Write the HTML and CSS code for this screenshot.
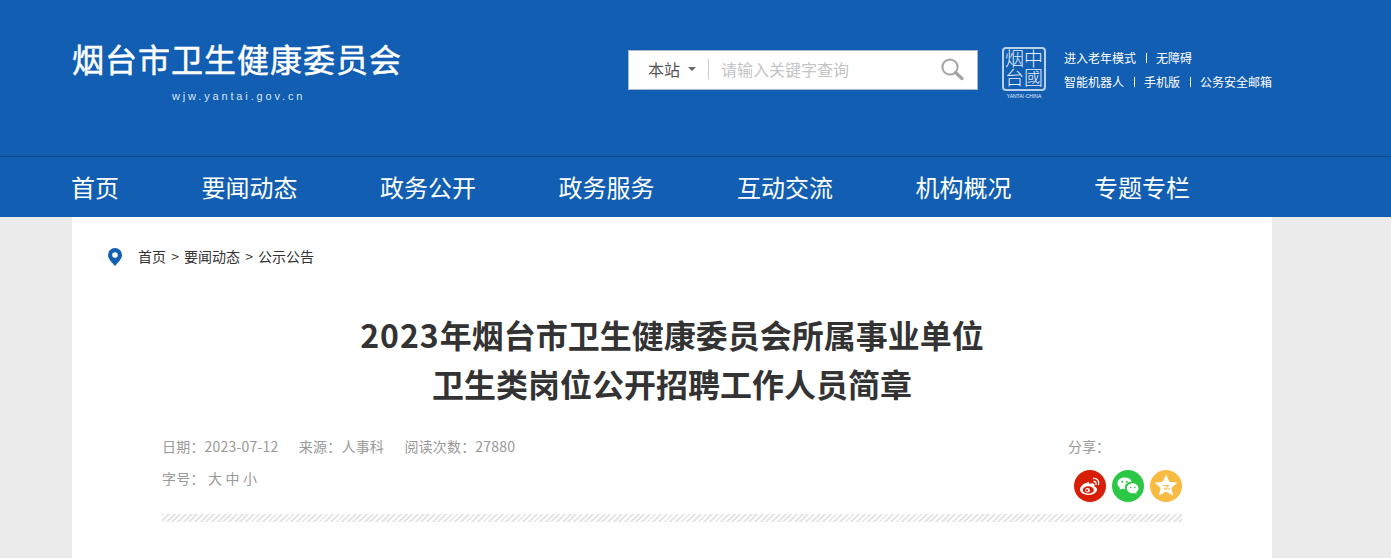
FILE: index.html
```html
<!DOCTYPE html>
<html lang="zh-CN">
<head>
<meta charset="UTF-8">
<title>烟台市卫生健康委员会</title>
<link rel="stylesheet" href="styles.css">
</head>
<body>
<header class="top">
  <div class="wrap top-inner">
    <div class="logo">
      <div class="logo-name">烟台市卫生健康委员会</div>
      <div class="logo-url">wjw.yantai.gov.cn</div>
    </div>
    <div class="search">
      <span class="scope">本站</span>
      <i class="caret"></i>
      <span class="divider"></span>
      <span class="placeholder">请输入关键字查询</span>
      <svg class="search-icon" width="24" height="24" viewBox="0 0 24 24">
        <circle cx="10" cy="10" r="7.6" fill="none" stroke="#a3a3a3" stroke-width="2"/>
        <path d="M15.5 15.5L22 21.5" stroke="#a3a3a3" stroke-width="3.2" stroke-linecap="round"/>
      </svg>
    </div>
    <div class="seal">
      <div class="seal-box">
        <span class="seal-col">烟台</span>
        <span class="seal-col">中國</span>
      </div>
      <div class="seal-en">YANTAI·CHINA</div>
    </div>
    <div class="quick">
      <div class="quick-row"><a>进入老年模式</a><a>无障碍</a></div>
      <div class="quick-row"><a>智能机器人</a><a>手机版</a><a>公务安全邮箱</a></div>
    </div>
  </div>
</header>

<nav class="nav">
  <div class="wrap nav-inner">
    <a>首页</a>
    <a>要闻动态</a>
    <a>政务公开</a>
    <a>政务服务</a>
    <a>互动交流</a>
    <a>机构概况</a>
    <a>专题专栏</a>
  </div>
</nav>

<main class="wrap content">
  <div class="crumbs">
    <svg class="pin" width="14" height="18" viewBox="0 0 14 18">
      <path fill-rule="evenodd" fill="#125fb3" d="M7 0a7 7 0 0 1 7 7c0 4-4 7.500-7 11C4 14.500 0 11 0 7a7 7 0 0 1 7-7zm0 4.200a2.800 2.800 0 1 0 0 5.600 2.800 2.800 0 0 0 0-5.600z"/>
    </svg>
    <span>首页 &gt; 要闻动态 &gt; 公示公告</span>
  </div>

  <h1 class="title"><span class="num">2023</span>年烟台市卫生健康委员会所属事业单位<br>卫生类岗位公开招聘工作人员简章</h1>

  <div class="meta">
    <div class="meta-left">
      <div class="meta-row">
        <span>日期：2023-07-12</span>
        <span>来源：人事科</span>
        <span>阅读次数：27880</span>
      </div>
      <div class="meta-row">
        <span>字号： 大 中 小</span>
      </div>
    </div>
    <div class="share">
      <div class="share-label">分享：</div>
      <div class="share-icons">
        <svg width="32" height="32" viewBox="0 0 32 32">
          <circle cx="16" cy="16" r="16" fill="#d81e06"/>
          <path fill="#fff" d="M13.500 12.500c-4 1-7.500 4-7.500 7 0 3 3.800 5.500 8.500 5.500 5 0 8.500-2.800 8.500-5.500 0-1.700-1.500-2.700-2.800-3 .4-1 .5-2-.2-2.700-1-1-3-.8-5 .2 .4-1.500 .2-2.800-1.500-1.500z"/>
          <ellipse cx="14.300" cy="20" rx="5.600" ry="3.700" fill="#d81e06"/>
          <circle cx="13.600" cy="20.200" r="2.300" fill="#fff"/>
          <circle cx="13.200" cy="20.400" r="1.100" fill="#d81e06"/>
          <path d="M19.500 8.500c3.500-.5 6 2.500 5 6M19.800 11.500c1.600-.2 2.600 1.200 2.200 2.800" fill="none" stroke="#fff" stroke-width="1.300" stroke-linecap="round"/>
        </svg>
        <svg width="32" height="32" viewBox="0 0 32 32">
          <circle cx="16" cy="16" r="16" fill="#2ac845"/>
          <path fill="#fff" d="M12.500 7.500c-4 0-7 2.600-7 5.900 0 1.900 1 3.400 2.600 4.500l-.7 2.200 2.500-1.300c.9.200 1.700.4 2.600.4h.7c-.2-.6-.3-1.200-.3-1.800 0-3.100 2.800-5.600 6.300-5.600h.6c-.8-2.800-3.600-4.300-7.300-4.300z"/>
          <path fill="#fff" d="M26.500 18.300c0-2.800-2.700-5-5.800-5-3.300 0-5.900 2.200-5.900 5s2.600 5 5.900 5c.7 0 1.400-.1 2-.3l1.900 1-.5-1.700c1.400-1 2.400-2.400 2.400-4z"/>
          <circle cx="10.200" cy="11.800" r="1" fill="#2ac845"/>
          <circle cx="14.800" cy="11.800" r="1" fill="#2ac845"/>
          <circle cx="18.600" cy="17.500" r=".8" fill="#2ac845"/>
          <circle cx="22.800" cy="17.500" r=".8" fill="#2ac845"/>
        </svg>
        <svg width="32" height="32" viewBox="0 0 32 32">
          <circle cx="16" cy="16" r="16" fill="#f8bb42"/>
          <path fill="#fff" d="M16 4.500l3.400 7.300 7.900.9-5.900 5.200 1.800 7.800-7.200-4.100-7.200 4.100 1.800-7.800-5.900-5.200 7.900-.9z"/>
          <path d="M13 15.500h6l-5 3.500h6" fill="none" stroke="#f8bb42" stroke-width="1"/>
        </svg>
      </div>
    </div>
  </div>
  <div class="stripe"></div>
</main>
</body>
</html>
```

FILE: styles.css
```css
html, body {
  margin: 0;
  padding: 0;
  height: 100%;
  overflow: hidden;
}
body {
  background: #ebebeb;
  font-family: "Noto Sans CJK SC", "Liberation Sans", sans-serif;
  display: flex;
  flex-direction: column;
}
.wrap {
  width: 1200px;
  margin-left: 72px;
}

/* header */
.top {
  background: #115eb2;
  height: 156px;
  border-bottom: 1px solid #0e4688;
  flex: none;
}
.top-inner {
  display: flex;
  align-items: flex-start;
}
.logo {
  width: 556px;
  padding-top: 36px;
  color: #fff;
}
.logo-name {
  font-size: 32px;
  line-height: 44px;
  -webkit-text-stroke: .5px #fff;
  letter-spacing: 1px;
  white-space: nowrap;
}
.logo-url {
  font-family: "Liberation Sans", sans-serif;
  font-size: 11px;
  line-height: 14px;
  letter-spacing: 2.85px;
  margin: 9px 0 0 100px;
  color: #d9e6f5;
}
.search {
  width: 350px;
  height: 40px;
  margin-top: 50px;
  box-sizing: border-box;
  background: #fff;
  border: 1px solid #a9b8cc;
  display: flex;
  align-items: center;
  padding-left: 19px;
  padding-bottom: 2px;
  font-size: 16px;
}
.scope {
  color: #555;
  line-height: 20px;
}
.caret {
  width: 0;
  height: 0;
  margin: 0 12px 0 8px;
  border: 4px solid transparent;
  border-top: 4px solid #666;
  border-bottom: 0;
}
.divider {
  width: 1px;
  height: 20px;
  background: #ccc;
  margin-right: 12px;
}
.placeholder {
  color: #c4c4c4;
  line-height: 20px;
  flex: 1;
}
.search-icon {
  margin-right: 13px;
}
.seal {
  width: 44px;
  margin: 47px 0 0 24px;
  color: #e4eef9;
}
.seal-box {
  width: 44px;
  height: 44px;
  box-sizing: border-box;
  border: 2px solid #b9d0ea;
  border-radius: 4px;
  display: flex;
  justify-content: center;
}
.seal-col {
  writing-mode: vertical-rl;
  font-size: 19px;
  line-height: 19px;
  font-weight: 300;
}
.seal-en {
  font-family: "Liberation Sans", sans-serif;
  font-size: 5px;
  line-height: 8px;
  margin-top: 1px;
  text-align: center;
  white-space: nowrap;
}
.quick {
  margin: 46px 0 0 18px;
  font-size: 12px;
  color: #fff;
}
.quick-row {
  display: flex;
  height: 24px;
  line-height: 24px;
  white-space: nowrap;
}
.quick-row a + a {
  position: relative;
  margin-left: 20px;
}
.quick-row a + a::before {
  content: "";
  position: absolute;
  left: -10px;
  top: 7px;
  width: 1px;
  height: 10px;
  background: #fff;
}

/* nav */
.nav {
  background: #115eb2;
  height: 60px;
  flex: none;
}
.nav-inner {
  width: 1119px;
  margin-left: 71px;
  display: flex;
  justify-content: space-between;
  font-size: 24px;
  line-height: 60px;
  color: #fff;
}

/* article */
.content {
  flex: 1;
  background: #fff;
  box-sizing: border-box;
  padding: 0 90px;
}
.crumbs {
  display: flex;
  align-items: center;
  height: 18px;
  margin: 30px 0 0 -54px;
  font-size: 14px;
  word-spacing: 2px;
  color: #333;
}
.pin {
  margin-right: 16px;
  margin-top: 1px;
}
.title {
  margin: 45px 0 0;
  text-align: center;
  font-size: 32px;
  line-height: 49px;
  font-weight: 700;
  color: #333;
}
.num {
  letter-spacing: 1px;
}
.meta {
  display: flex;
  justify-content: space-between;
  margin-top: 27px;
  font-size: 14px;
  color: #999;
}
.meta-row {
  height: 32px;
  line-height: 22px;
  letter-spacing: .2px;
}
.meta-row span + span {
  margin-left: 17px;
}
.share {
  width: 114px;
}
.share-label {
  height: 22px;
  line-height: 22px;
}
.share-icons {
  display: flex;
  gap: 6px;
  margin: 13px 0 0 6px;
}
.stripe {
  height: 8px;
  margin-top: 12px;
  background: repeating-linear-gradient(135deg, #e6e6e6 0, #e6e6e6 2px, #fff 2px, #fff 4px);
}
```
